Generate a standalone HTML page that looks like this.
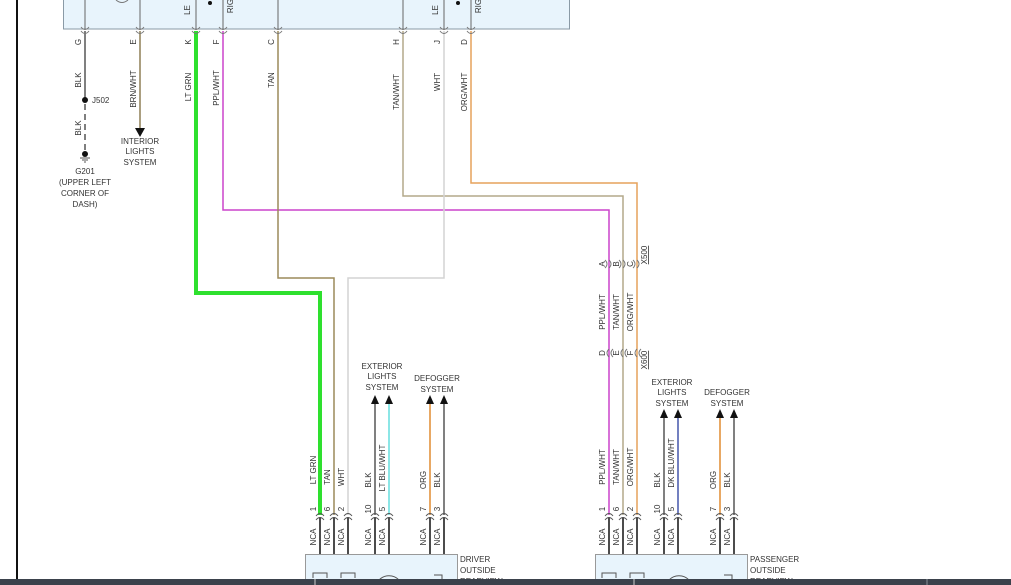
<!DOCTYPE html>
<html><head><meta charset="utf-8"><style>
html,body{margin:0;padding:0;background:#fff;width:1011px;height:585px;overflow:hidden}
svg{display:block}
text{font-family:"Liberation Sans",sans-serif;font-size:8px;fill:#333}
</style></head><body>
<svg width="1011" height="585" viewBox="0 0 1011 585">
<line x1="17" y1="0" x2="17" y2="585" stroke="#111" stroke-width="2"/>
<!-- top box -->
<rect x="63.5" y="-2" width="506" height="31" fill="#e8f4fc" stroke="#8a9aa6"/>
<g stroke="#666" stroke-width="1">
<line x1="85" y1="0" x2="85" y2="29"/><line x1="140" y1="0" x2="140" y2="29"/>
<line x1="196" y1="0" x2="196" y2="29"/><line x1="223" y1="0" x2="223" y2="29"/>
<line x1="278" y1="0" x2="278" y2="29"/><line x1="403" y1="0" x2="403" y2="29"/>
<line x1="444" y1="0" x2="444" y2="29"/><line x1="471" y1="0" x2="471" y2="29"/>
</g>
<circle cx="210" cy="3" r="2" fill="#111"/><circle cx="458" cy="3" r="2" fill="#111"/>
<text transform="translate(190,10) rotate(-90)" text-anchor="middle">LE</text>
<text transform="translate(233,6) rotate(-90)" text-anchor="middle">RIG</text>
<text transform="translate(438,10) rotate(-90)" text-anchor="middle">LE</text>
<text transform="translate(481,6) rotate(-90)" text-anchor="middle">RIG</text>
<path d="M116 0 Q122 5 128 0" fill="none" stroke="#777"/>
<!-- wires -->
<g fill="none" stroke-linejoin="miter">
<path d="M85 31V100" stroke="#555" stroke-width="1.5"/>
<path d="M85 104V152" stroke="#555" stroke-width="1.5" stroke-dasharray="6,4"/>
<path d="M140 31V130" stroke="#8f7f55" stroke-width="1.5"/>
<path d="M196 31V293H320V515" stroke="#2ee02e" stroke-width="4"/>
<path d="M223 31V210H609V515" stroke="#cc44cc" stroke-width="1.5"/>
<path d="M278 31V278H334V515" stroke="#9c8a5a" stroke-width="1.5"/>
<path d="M403 31V196H623V515" stroke="#b3a98a" stroke-width="1.5"/>
<path d="M444 31V278H348V515" stroke="#d4d4d4" stroke-width="1.5"/>
<path d="M471 31V183H637V515" stroke="#e6a25c" stroke-width="1.5"/>
<!-- driver feeds -->
<path d="M375 400V515" stroke="#555" stroke-width="1.5"/>
<path d="M389 400V515" stroke="#66dddd" stroke-width="1.5"/>
<path d="M430 400V515" stroke="#e08a30" stroke-width="1.5"/>
<path d="M444 400V515" stroke="#555" stroke-width="1.5"/>
<path d="M664 414V515" stroke="#555" stroke-width="1.5"/>
<path d="M678 414V515" stroke="#4455aa" stroke-width="1.5"/>
<path d="M720 414V515" stroke="#e08a30" stroke-width="1.5"/>
<path d="M734 414V515" stroke="#555" stroke-width="1.5"/>
</g>
<!-- top connector chevrons -->
<g fill="none" stroke="#777" stroke-width="1">
<path d="M81 27Q85 32 89 27M81 31Q85 36 89 31"/><path d="M136 27Q140 32 144 27M136 31Q140 36 144 31"/>
<path d="M192 27Q196 32 200 27M192 31Q196 36 200 31"/><path d="M219 27Q223 32 227 27M219 31Q223 36 227 31"/>
<path d="M274 27Q278 32 282 27M274 31Q278 36 282 31"/><path d="M399 27Q403 32 407 27M399 31Q403 36 407 31"/>
<path d="M440 27Q444 32 448 27M440 31Q444 36 448 31"/><path d="M467 27Q471 32 475 27M467 31Q471 36 475 31"/>
</g>
<!-- J502 / ground -->
<circle cx="85" cy="100" r="3" fill="#111"/><text x="92" y="103">J502</text>
<circle cx="85" cy="154" r="3" fill="#111"/>
<path d="M80 158H90M82 160H88M84 162H86" stroke="#555"/>
<g text-anchor="middle"><text x="85" y="174">G201</text><text x="85" y="185">(UPPER LEFT</text><text x="85" y="196">CORNER OF</text><text x="85" y="207">DASH)</text>
<text x="140" y="144">INTERIOR</text><text x="140" y="154">LIGHTS</text><text x="140" y="165">SYSTEM</text>
<text x="382" y="369">EXTERIOR</text><text x="382" y="379">LIGHTS</text><text x="382" y="390">SYSTEM</text>
<text x="437" y="381">DEFOGGER</text><text x="437" y="392">SYSTEM</text>
<text x="672" y="385">EXTERIOR</text><text x="672" y="395">LIGHTS</text><text x="672" y="406">SYSTEM</text>
<text x="727" y="395">DEFOGGER</text><text x="727" y="406">SYSTEM</text></g>
<path d="M135 128H145L140 137Z" fill="#111"/>
<g fill="#111"><path d="M371 404H379L375 395Z"/><path d="M385 404H393L389 395Z"/><path d="M426 404H434L430 395Z"/><path d="M440 404H448L444 395Z"/>
<path d="M660 418H668L664 409Z"/><path d="M674 418H682L678 409Z"/><path d="M716 418H724L720 409Z"/><path d="M730 418H738L734 409Z"/></g>
<!-- rotated labels -->
<g text-anchor="middle">
<text transform="translate(81,42) rotate(-90)">G</text><text transform="translate(136,42) rotate(-90)">E</text>
<text transform="translate(191,42) rotate(-90)">K</text><text transform="translate(219,42) rotate(-90)">F</text>
<text transform="translate(274,42) rotate(-90)">C</text><text transform="translate(399,42) rotate(-90)">H</text>
<text transform="translate(440,42) rotate(-90)">J</text><text transform="translate(467,42) rotate(-90)">D</text>
<text transform="translate(81,80) rotate(-90)">BLK</text><text transform="translate(136,89) rotate(-90)">BRN/WHT</text>
<text transform="translate(191,87) rotate(-90)">LT GRN</text><text transform="translate(219,88) rotate(-90)">PPL/WHT</text>
<text transform="translate(274,80) rotate(-90)">TAN</text><text transform="translate(399,92) rotate(-90)">TAN/WHT</text>
<text transform="translate(440,82) rotate(-90)">WHT</text><text transform="translate(467,92) rotate(-90)">ORG/WHT</text>
<text transform="translate(81,128) rotate(-90)">BLK</text>
<!-- driver -->
<text transform="translate(316,470) rotate(-90)">LT GRN</text><text transform="translate(330,477) rotate(-90)">TAN</text>
<text transform="translate(344,477) rotate(-90)">WHT</text><text transform="translate(371,480) rotate(-90)">BLK</text>
<text transform="translate(385,468) rotate(-90)">LT BLU/WHT</text><text transform="translate(426,480) rotate(-90)">ORG</text>
<text transform="translate(440,480) rotate(-90)">BLK</text>
<!-- passenger -->
<text transform="translate(605,467) rotate(-90)">PPL/WHT</text><text transform="translate(619,467) rotate(-90)">TAN/WHT</text>
<text transform="translate(633,467) rotate(-90)">ORG/WHT</text><text transform="translate(660,480) rotate(-90)">BLK</text>
<text transform="translate(674,463) rotate(-90)">DK BLU/WHT</text><text transform="translate(716,480) rotate(-90)">ORG</text>
<text transform="translate(730,480) rotate(-90)">BLK</text>
<text transform="translate(605,312) rotate(-90)">PPL/WHT</text><text transform="translate(619,312) rotate(-90)">TAN/WHT</text>
<text transform="translate(633,312) rotate(-90)">ORG/WHT</text>
<text transform="translate(605,264) rotate(-90)">A</text><text transform="translate(619,264) rotate(-90)">B</text><text transform="translate(633,264) rotate(-90)">C</text>
<text transform="translate(605,353) rotate(-90)">D</text><text transform="translate(619,353) rotate(-90)">E</text><text transform="translate(633,353) rotate(-90)">F</text>
<text transform="translate(647,255) rotate(-90)" text-decoration="underline">X500</text>
<text transform="translate(647,360) rotate(-90)" text-decoration="underline">X600</text>
</g>
<g fill="none" stroke="#777">
<path d="M605 260Q609 264 605 268M609 260Q613 264 609 268M619 260Q623 264 619 268M623 260Q627 264 623 268M633 260Q637 264 633 268M637 260Q641 264 637 268"/>
<path d="M609 349Q605 353 609 357M613 349Q609 353 613 357M623 349Q619 353 623 357M627 349Q623 353 627 357M637 349Q633 353 637 357M641 349Q637 353 641 357"/>
</g>
<!-- bottom boxes -->
<rect x="305.5" y="554.5" width="152" height="32" fill="#e8f4fc" stroke="#999"/>
<rect x="595.5" y="554.5" width="152" height="32" fill="#e8f4fc" stroke="#999"/>
<g text-anchor="start"><text x="460" y="562">DRIVER</text><text x="460" y="573">OUTSIDE</text><text x="460" y="584">REARVIEW</text>
<text x="750" y="562">PASSENGER</text><text x="750" y="573">OUTSIDE</text><text x="750" y="584">REARVIEW</text></g>
<g id="conn">
<g stroke="#111" stroke-width="1.5">
<path d="M320 517V554M334 517V554M348 517V554M375 517V554M389 517V554M430 517V554M444 517V554"/>
<path d="M609 517V554M623 517V554M637 517V554M664 517V554M678 517V554M720 517V554M734 517V554"/>
</g>
<g fill="none" stroke="#555">
<path d="M316 516Q320 511 324 516M316 520Q320 515 324 520M330 516Q334 511 338 516M330 520Q334 515 338 520M344 516Q348 511 352 516M344 520Q348 515 352 520M371 516Q375 511 379 516M371 520Q375 515 379 520M385 516Q389 511 393 516M385 520Q389 515 393 520M426 516Q430 511 434 516M426 520Q430 515 434 520M440 516Q444 511 448 516M440 520Q444 515 448 520"/>
<path d="M605 516Q609 511 613 516M605 520Q609 515 613 520M619 516Q623 511 627 516M619 520Q623 515 627 520M633 516Q637 511 641 516M633 520Q637 515 641 520M660 516Q664 511 668 516M660 520Q664 515 668 520M674 516Q678 511 682 516M674 520Q678 515 682 520M716 516Q720 511 724 516M716 520Q720 515 724 520M730 516Q734 511 738 516M730 520Q734 515 738 520"/>
<path d="M313 578V573H327V578M341 578V573H355V578M379 580A14 14 0 0 1 399 580M434 575H442V580"/>
<path d="M602 578V573H616V578M630 578V573H644V578M669 580A14 14 0 0 1 689 580M724 575H732V580"/>
</g>
</g>
<g text-anchor="middle">
<text transform="translate(316,509) rotate(-90)">1</text><text transform="translate(330,509) rotate(-90)">6</text><text transform="translate(344,509) rotate(-90)">2</text><text transform="translate(371,509) rotate(-90)">10</text><text transform="translate(385,509) rotate(-90)">5</text><text transform="translate(426,509) rotate(-90)">7</text><text transform="translate(440,509) rotate(-90)">3</text>
<text transform="translate(605,509) rotate(-90)">1</text><text transform="translate(619,509) rotate(-90)">6</text><text transform="translate(633,509) rotate(-90)">2</text><text transform="translate(660,509) rotate(-90)">10</text><text transform="translate(674,509) rotate(-90)">5</text><text transform="translate(716,509) rotate(-90)">7</text><text transform="translate(730,509) rotate(-90)">3</text>
<text transform="translate(316,537) rotate(-90)">NCA</text><text transform="translate(330,537) rotate(-90)">NCA</text><text transform="translate(344,537) rotate(-90)">NCA</text><text transform="translate(371,537) rotate(-90)">NCA</text><text transform="translate(385,537) rotate(-90)">NCA</text><text transform="translate(426,537) rotate(-90)">NCA</text><text transform="translate(440,537) rotate(-90)">NCA</text>
<text transform="translate(605,537) rotate(-90)">NCA</text><text transform="translate(619,537) rotate(-90)">NCA</text><text transform="translate(633,537) rotate(-90)">NCA</text><text transform="translate(660,537) rotate(-90)">NCA</text><text transform="translate(674,537) rotate(-90)">NCA</text><text transform="translate(716,537) rotate(-90)">NCA</text><text transform="translate(730,537) rotate(-90)">NCA</text>
</g>
<!-- bottom bar -->
<rect x="0" y="579" width="1011" height="6" fill="#3b424c"/>
<line x1="927" y1="579" x2="927" y2="585" stroke="#8a9099"/>
<line x1="315" y1="579" x2="315" y2="585" stroke="#ccc"/><line x1="634" y1="579" x2="634" y2="585" stroke="#ccc"/>
</svg>
</body></html>
